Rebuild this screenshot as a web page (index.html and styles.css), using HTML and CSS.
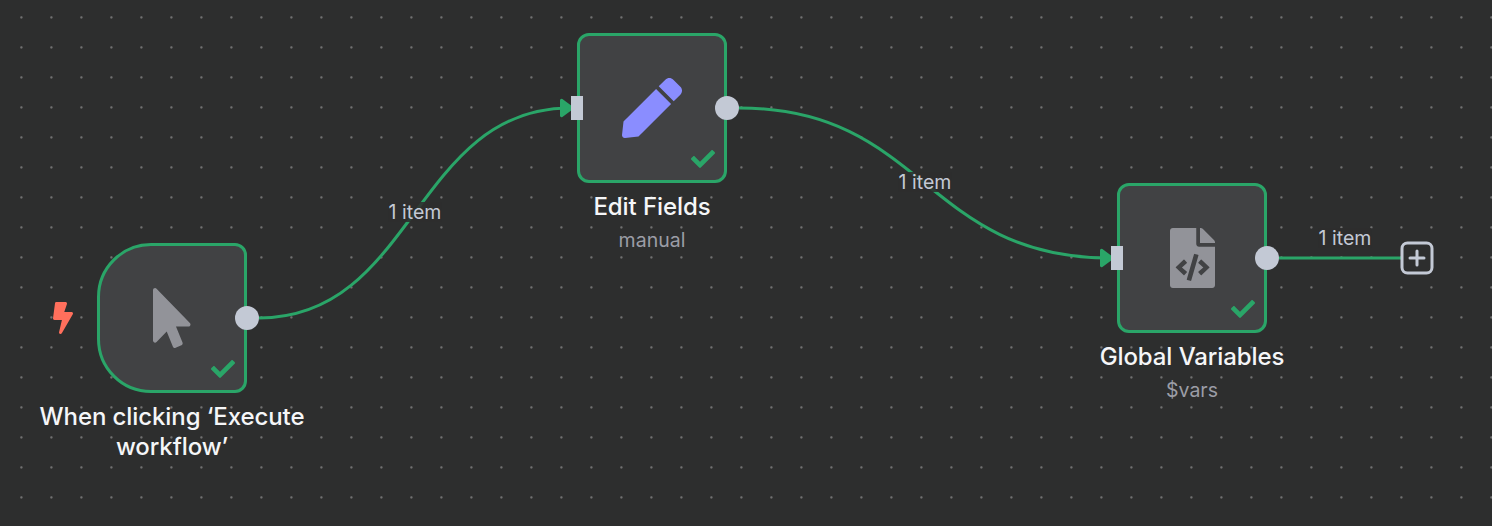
FILE: index.html
```html
<!DOCTYPE html>
<html lang="en">
<head>
<meta charset="utf-8">
<title>Workflow</title>
<link rel="stylesheet" href="styles.css">
</head>
<body>
<main class="canvas">
  <svg class="edges" viewBox="0 0 1492 526">
    <g class="edge">
      <path d="M259 318C414.5 318 414.5 108 570 108"/>
      <path d="M739 108C924.5 108 924.5 258 1110 258"/>
      <path d="M1279 258H1401"/>
    </g>
    <g class="arrow">
      <path d="M561.500 100.300L572 108L561.500 115.700Z"/>
      <path d="M1101.500 250.300L1112 258L1101.500 265.700Z"/>
    </g>
  </svg>
  <span class="edge-label label-first">1 item</span>
  <span class="edge-label label-second">1 item</span>
  <span class="edge-label label-third">1 item</span>

  <section class="node node-trigger">
    <svg class="bolt" viewBox="0 0 320 512" preserveAspectRatio="none"><path d="M296 160H180.6l42.6-129.8C227.2 15 215.7 0 200 0H56C44 0 33.800 8.900 32.200 20.800l-32 240C-1.700 275.200 9.500 288 24 288h118.700L96.600 482.500c-3.600 15.200 8 29.500 23.300 29.500 8.400 0 16.400-4.400 20.800-12l176-304c9.300-15.900-2.200-36-20.700-36z"/></svg>
    <div class="box">
      <svg class="icon gray" viewBox="0 0 320 512"><path d="M302.189 329.126H196.105l55.831 135.993c3.889 9.428-.555 19.999-9.444 23.999l-49.165 21.427c-9.165 4-19.443-.571-23.332-9.714l-53.053-129.136-86.664 89.138C18.729 472.71 0 463.554 0 447.977V18.299C0 1.899 19.921-6.096 30.277 5.443l284.412 292.542c11.472 11.179 3.007 31.141-12.5 31.141z"/></svg>
      <svg class="check" viewBox="0 0 512 512"><path d="M173.898 439.404l-166.4-166.4c-9.997-9.997-9.997-26.206 0-36.204l36.203-36.204c9.997-9.998 26.207-9.998 36.204 0L192 312.69 432.095 72.596c9.997-9.997 26.207-9.997 36.204 0l36.203 36.204c9.997 9.997 9.997 26.206 0 36.204l-294.4 294.401c-9.998 9.997-26.207 9.997-36.204-.001z"/></svg>
      <i class="output"></i>
    </div>
    <h2 class="title">When clicking ‘Execute workflow’</h2>
  </section>

  <section class="node node-edit">
    <div class="box">
      <svg class="icon purple" viewBox="0 0 512 512"><path d="M290.74 93.24l128.02 128.02-277.99 277.99-114.14 12.6C11.35 513.54-1.56 500.62.14 485.34l12.7-114.22 277.9-277.88zm207.2-19.06l-60.11-60.11c-18.75-18.75-49.16-18.75-67.91 0l-56.55 56.55 128.02 128.02 56.55-56.55c18.75-18.76 18.75-49.16 0-67.91z"/></svg>
      <svg class="check" viewBox="0 0 512 512"><path d="M173.898 439.404l-166.4-166.4c-9.997-9.997-9.997-26.206 0-36.204l36.203-36.204c9.997-9.998 26.207-9.998 36.204 0L192 312.69 432.095 72.596c9.997-9.997 26.207-9.997 36.204 0l36.203 36.204c9.997 9.997 9.997 26.206 0 36.204l-294.4 294.401c-9.998 9.997-26.207 9.997-36.204-.001z"/></svg>
      <i class="input"></i>
      <i class="output"></i>
    </div>
    <h2 class="title">Edit Fields</h2>
    <p class="subtitle">manual</p>
  </section>

  <section class="node node-vars">
    <div class="box">
      <svg class="icon gray" viewBox="0 0 384 512"><path d="M384 121.941V128H256V0h6.059c6.365 0 12.47 2.529 16.971 7.029l97.941 97.941A24.005 24.005 0 0 1 384 121.941zM248 160c-13.2 0-24-10.8-24-24V0H24C10.745 0 0 10.745 0 24v464c0 13.255 10.745 24 24 24h336c13.255 0 24-10.745 24-24V160H248z"/><path class="cutout" d="M123.206 400.505a5.4 5.4 0 0 1-7.633.246l-64.866-60.812a5.4 5.4 0 0 1 0-7.879l64.866-60.812a5.4 5.4 0 0 1 7.633.246l19.579 20.885a5.4 5.4 0 0 1-.372 7.747L101.65 336l40.763 35.874a5.4 5.4 0 0 1 .372 7.747l-19.579 20.884zm51.295 50.479l-27.453-7.97a5.402 5.402 0 0 1-3.681-6.692l61.44-211.626a5.402 5.402 0 0 1 6.692-3.681l27.452 7.97a5.4 5.4 0 0 1 3.68 6.692l-61.44 211.626a5.397 5.397 0 0 1-6.69 3.681zm160.792-111.045l-64.866 60.812a5.4 5.4 0 0 1-7.633-.246l-19.58-20.885a5.4 5.4 0 0 1 .372-7.747L284.35 336l-40.763-35.874a5.4 5.4 0 0 1-.372-7.747l19.58-20.885a5.4 5.4 0 0 1 7.633-.246l64.866 60.812a5.4 5.4 0 0 1-.001 7.879z"/></svg>
      <svg class="check" viewBox="0 0 512 512"><path d="M173.898 439.404l-166.4-166.4c-9.997-9.997-9.997-26.206 0-36.204l36.203-36.204c9.997-9.998 26.207-9.998 36.204 0L192 312.69 432.095 72.596c9.997-9.997 26.207-9.997 36.204 0l36.203 36.204c9.997 9.997 9.997 26.206 0 36.204l-294.4 294.401c-9.998 9.997-26.207 9.997-36.204-.001z"/></svg>
      <i class="input"></i>
      <i class="output"></i>
    </div>
    <h2 class="title">Global Variables</h2>
    <p class="subtitle">$vars</p>
  </section>

  <svg class="add" viewBox="0 0 34 34"><rect x="2" y="2" width="30" height="30" rx="5.500"/><path d="M17 10V24M10 17H24"/></svg>
</main>
</body>
</html>
```
FILE: styles.css
```css
body {
  margin: 0;
}

.canvas {
  position: relative;
  width: 1492px;
  height: 526px;
  overflow: hidden;
  background-color: #2d2e2e;
  background-image: radial-gradient(circle at 21.4px 17.4px, #707171 0.6px, transparent 1.7px);
  background-size: 30px 30px;
  font-family: Inter, "Liberation Sans", sans-serif;
}

.edges {
  position: absolute;
  inset: 0;
  width: 1492px;
  height: 526px;
}

.edge {
  fill: none;
  stroke: #2aa568;
  stroke-width: 3;
}

.arrow {
  fill: #2aa568;
  stroke: #2aa568;
  stroke-width: 3;
  stroke-linejoin: round;
}

.edge-label {
  position: absolute;
  transform: translate(-50%, -50%);
  background: rgba(45, 46, 46, 0.88);
  color: #c3c9d5;
  font-size: 19.500px;
  line-height: 20px;
  white-space: nowrap;
}

.label-first {
  left: 415px;
  top: 212px;
}

.label-second {
  left: 925px;
  top: 182px;
}

.label-third {
  left: 1345px;
  top: 238px;
}

.node {
  position: absolute;
  width: 270px;
  display: flex;
  flex-direction: column;
  align-items: center;
}

.node-trigger {
  left: 37px;
  top: 243px;
}

.node-edit {
  left: 517px;
  top: 33px;
}

.node-vars {
  left: 1057px;
  top: 183px;
}

.box {
  position: relative;
  box-sizing: border-box;
  width: 150px;
  height: 150px;
  border: 3px solid #2aa568;
  border-radius: 12px;
  background: #414244;
  display: flex;
  align-items: center;
  justify-content: center;
}

.node-trigger .box {
  border-radius: 54px 12px 12px 54px;
}

.icon {
  height: 60px;
}

.gray {
  fill: #929399;
}

.purple {
  fill: #8a8dff;
}

.cutout {
  fill: #414244;
}

.check {
  position: absolute;
  right: 9px;
  bottom: 9px;
  width: 24px;
  height: 24px;
  fill: #2aa568;
}

.bolt {
  position: absolute;
  left: 16px;
  top: 59px;
  width: 20px;
  height: 32px;
  fill: #ff6f5c;
}

.input,
.output {
  position: absolute;
  height: 24px;
  top: 60px;
  background: #c3c9d5;
}

.input {
  left: -9px;
  width: 12px;
}

.output {
  right: -15px;
  width: 24px;
  border-radius: 50%;
}

.title {
  margin: 9px 0 0;
  color: #f5f6f8;
  font-size: 24px;
  font-weight: 500;
  line-height: 30px;
  letter-spacing: -0.09px;
  text-align: center;
}

.subtitle {
  margin: 6px 0 0;
  color: #9b9da6;
  font-size: 19.500px;
  line-height: 24px;
}

.add {
  position: absolute;
  left: 1400px;
  top: 241px;
  width: 34px;
  height: 34px;
  fill: #2d2e2e;
  stroke: #c3c9d5;
  stroke-width: 3;
  stroke-linecap: round;
}
```
